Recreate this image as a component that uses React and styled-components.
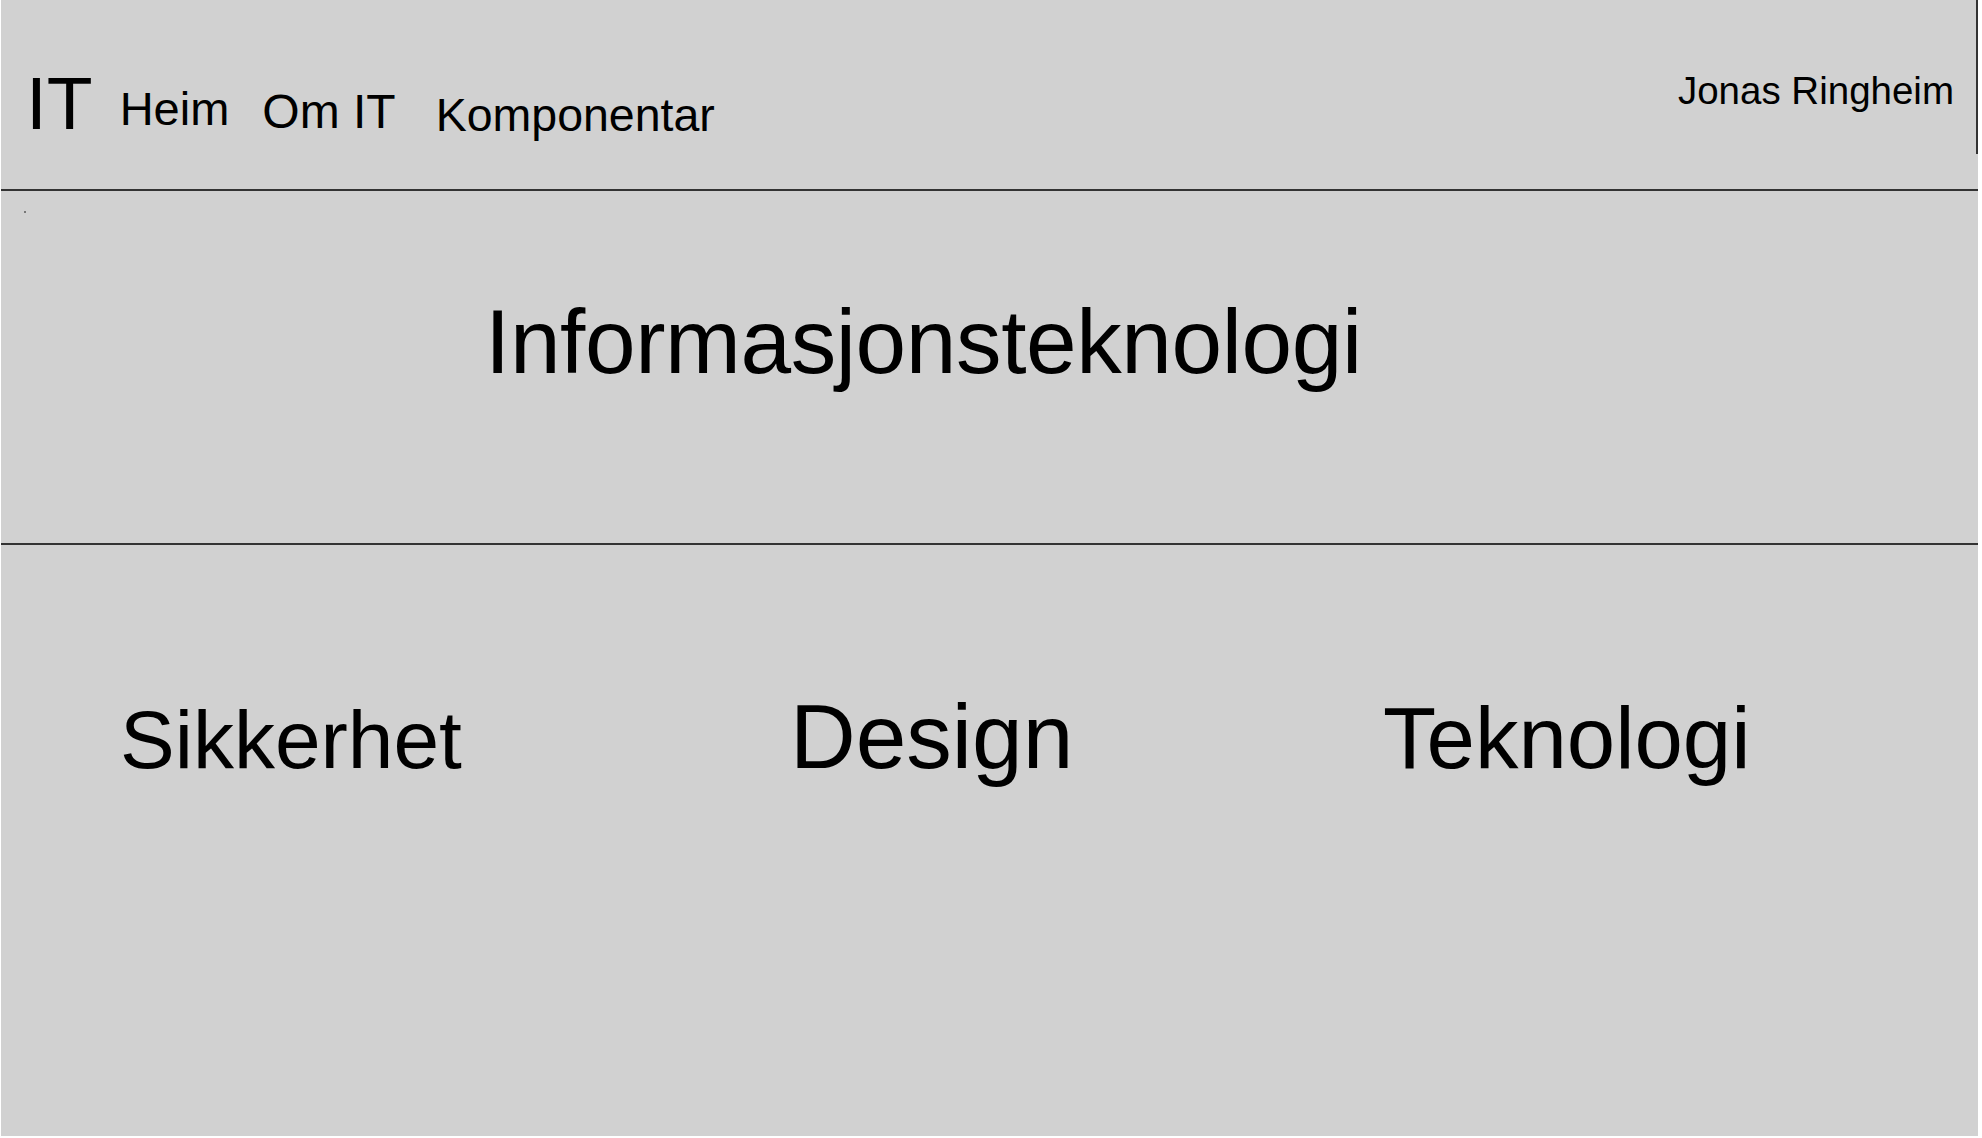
import React from 'react';
import styled, { createGlobalStyle } from 'styled-components';

const GlobalStyle = createGlobalStyle`
    html, body {
        margin:0;
        padding:0;
        background:#fff;
    }
    body {
        font-family:"Liberation Sans", Arial, sans-serif;
        color:#000;
    }
`;

const Page = styled.div`
    width:1977px;
    height:1136px;
    margin-left:1px;
    background:#d1d1d1;
    display:flex;
    flex-direction:column;
`;

const Header = styled.header`
    height:189px;
    border-bottom:2px solid #333;
`;

const TopBar = styled.nav`
    height:154px;
    display:flex;
    align-items:flex-start;
    padding-left:25px;
    padding-right:22px;
    border-right:2px solid #333;
    box-sizing:border-box;
`;

const NavItem = styled.a`
    font-size:${p => p.$size}px;
    line-height:1;
    margin-top:${p => p.$top}px;
    margin-left:${p => p.$gap || 0}px;
    white-space:nowrap;
    color:#000;
    text-decoration:none;
    cursor:pointer;
`;

const User = styled(NavItem)`
    margin-left:auto;
`;

const Hero = styled.section`
    position:relative;
    height:354px;
    box-sizing:border-box;
    padding:105px 0 0 484px;
    border-bottom:2px solid #333;
    &::before{
        content:'';
        position:absolute;
        left:23px;
        top:20px;
        width:2px;
        height:2px;
        background:#777;
    }
`;

const Title = styled.h1`
    margin:0;
    font-size:91px;
    font-weight:normal;
    line-height:1;
    letter-spacing:-0.4px;
`;

const Topics = styled.section`
    flex:1;
    display:grid;
    grid-template-columns:670px 593px auto;
    align-items:baseline;
    align-content:start;
    padding:146px 0 0 119px;
`;

const Topic = styled.h2`
    margin:0;
    font-weight:normal;
    font-size:${p => p.$size}px;
    line-height:1;
`;

const App = () => {
    return (
        <Page>
            <GlobalStyle />
            <Header>
                <TopBar>
                    <NavItem $size={75} $top={66}>IT</NavItem>
                    <NavItem $size={47} $top={85} $gap={27}>Heim</NavItem>
                    <NavItem $size={48} $top={88} $gap={33}>Om IT</NavItem>
                    <NavItem $size={46.5} $top={92} $gap={40}>Komponentar</NavItem>
                    <User $size={38.5} $top={72}>Jonas Ringheim</User>
                </TopBar>
            </Header>
            <Hero>
                <Title>Informasjonsteknologi</Title>
            </Hero>
            <Topics>
                <Topic $size={82}>Sikkerhet</Topic>
                <Topic $size={91}>Design</Topic>
                <Topic $size={87}>Teknologi</Topic>
            </Topics>
        </Page>
    )
}

export default App;
